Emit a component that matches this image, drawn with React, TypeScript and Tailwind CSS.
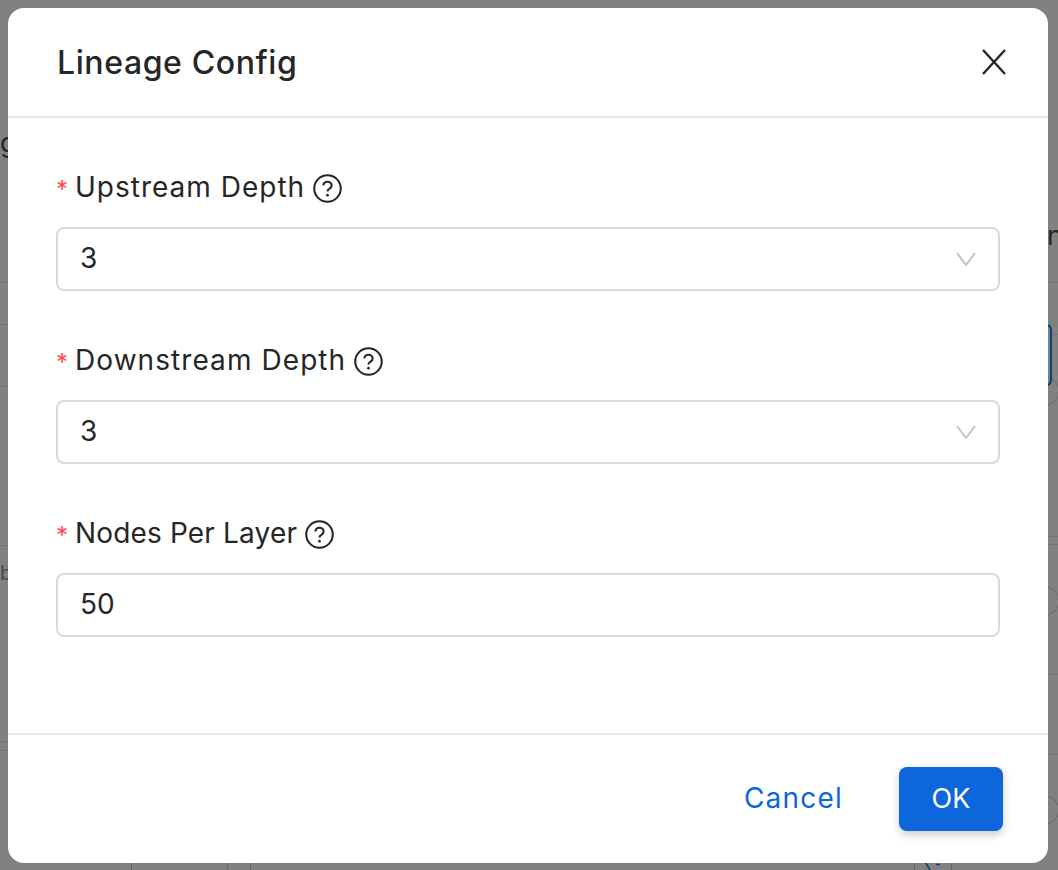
function HelpIcon() {
  return (
    <svg width="29" height="29" viewBox="0 0 28 28" fill="none" className="shrink-0">
      <circle cx="14" cy="14" r="12.8" stroke="#262626" strokeWidth="2" />
      <path d="M10 11.2c0-2.3 1.8-3.8 4-3.8s4 1.5 4 3.6c0 1.6-.9 2.5-2.2 3.3-1.2.7-1.8 1.3-1.8 2.7" stroke="#262626" strokeWidth="2" fill="none" />
      <circle cx="14" cy="20.4" r="1.3" fill="#262626" />
    </svg>
  );
}

function FieldLabel({ text, tracking }: { text: string; tracking: string }) {
  return (
    <div className="flex items-center h-[28px] text-[#262626] text-[28px]">
      <span className="text-[#ff4d4f] text-[24px] w-[19px] leading-none pt-[3px]">*</span>
      <span className={`pb-[2px] ${tracking}`}>{text}</span>
      <span className="ml-[8px]"><HelpIcon /></span>
    </div>
  );
}

function SelectField({ label, value, tracking }: { label: string; value: string; tracking: string }) {
  return (
    <div className="h-[173px] pt-[56px]">
      <FieldLabel text={label} tracking={tracking} />
      <div className="mt-[25px] h-[64px] border-2 border-[#d9d9d9] rounded-[8px] flex items-center justify-between pl-[22px] pr-[22px] text-[28px] text-[#262626]">
        <span className="pb-[2px]">{value}</span>
        <svg width="20" height="14" viewBox="0 0 20 14" fill="none">
          <path d="M1 1l9 12 9-12" stroke="#c4c4c4" strokeWidth="2" />
        </svg>
      </div>
    </div>
  );
}

// what is left visible of the lineage graph behind the mask
function BackdropGraph() {
  return (
    <svg className="absolute inset-0" width="1058" height="870" viewBox="0 0 1058 870" fill="none">
      <g stroke="#737373" strokeWidth="1">
        <path d="M0 282.5H1058M0 324.5H10M0 386.5H10M0 545.5H10M0 741.5H10M0 750.5H10" />
        <path d="M1050 334.5H1058M1046 536.5H1058M1046 544.5H1058M1046 674.5H1058M1046 754.5H1058" />
      </g>
      <g stroke="#666666" strokeWidth="1">
        <circle cx="1045" cy="391" r="14" />
        <circle cx="1045" cy="601" r="14" />
        <circle cx="1045" cy="810" r="14" />
        <path d="M131.5 860V870M229 860L227 870M250.5 860V870M914.5 860V870M951.5 860V870" />
      </g>
      <path d="M1040 325H1046Q1051 325 1051 330V380Q1051 385 1046 385H1040" stroke="#0a3f80" strokeWidth="2" />
      <path d="M924 860L930 870M936 864.5H940" stroke="#0a3f80" strokeWidth="1.5" />
      <text x="0" y="152" fontSize="27" fill="#262626" fontFamily="Inter, sans-serif">g</text>
      <text x="1047" y="245" fontSize="27" fill="#262626" fontFamily="Inter, sans-serif">n</text>
      <text x="0" y="580" fontSize="20" fill="#4a4a4a" fontFamily="Inter, sans-serif">b</text>
    </svg>
  );
}

export default function App() {
  return (
    <div className="relative h-[870px] w-[1058px] overflow-hidden bg-[#818181] font-['Inter',sans-serif] p-2">
      <BackdropGraph />

      <div className="relative h-[855px] w-[1040px] bg-white rounded-[16px] flex flex-col">
        <div className="h-[110px] shrink-0 border-b-2 border-[#e2e8f0] pl-[49px] pr-[42px] flex items-center justify-between">
          <h1 className="pt-[2px] text-[32px] font-medium text-[#262626] tracking-[0.6px]">Lineage Config</h1>
          <svg width="24" height="26" viewBox="0 0 24 26" fill="none">
            <path d="M1 1l22 24M23 1L1 25" stroke="#262626" strokeWidth="2.4" />
          </svg>
        </div>
        <div className="flex-1 px-[48px]">
          <SelectField label="Upstream Depth" value="3" tracking="tracking-[1px]" />
          <SelectField label="Downstream Depth" value="3" tracking="tracking-[1.07px]" />
          <div className="pt-[56px]">
            <FieldLabel text="Nodes Per Layer" tracking="tracking-[0.16px]" />
            <div className="mt-[25px] h-[64px] border-2 border-[#d9d9d9] rounded-[8px] flex items-center pl-[22px] text-[28px] text-[#262626]">
              <span className="pb-[2px]">50</span>
            </div>
          </div>
        </div>
        <div className="h-[130px] shrink-0 border-t-2 border-[#e2e8f0] flex items-start justify-end pt-[32px] pr-[45px]">
          <button className="h-[64px] mr-[56px] pb-[2px] text-[28px] tracking-[1.2px] text-[#0d66dc]">Cancel</button>
          <button className="h-[64px] w-[104px] bg-[#0d66dc] text-white text-[27px] rounded-[8px] shadow-[0_4px_8px_rgba(0,0,0,0.2)]">OK</button>
        </div>
      </div>
    </div>
  );
}
